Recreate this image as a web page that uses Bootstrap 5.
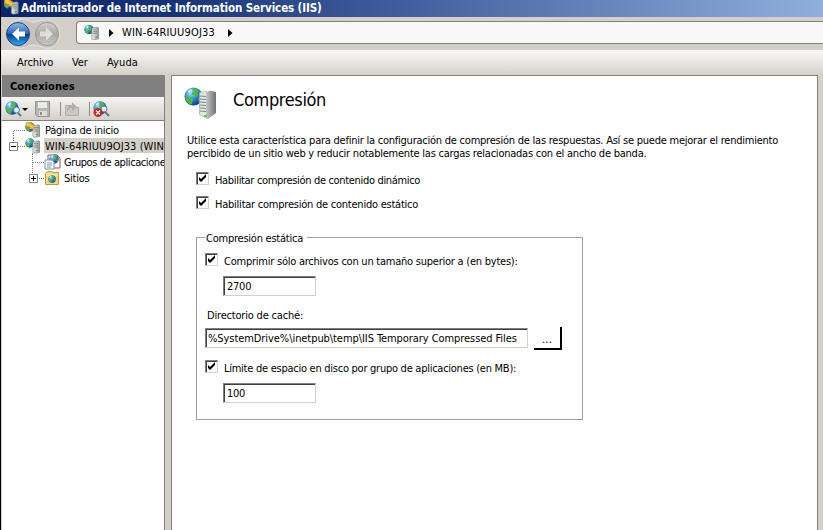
<!DOCTYPE html>
<html lang="es">
<head>
<meta charset="utf-8">
<title>Administrador de Internet Information Services (IIS)</title>
<link href="https://cdn.jsdelivr.net/npm/bootstrap@5.3.0/dist/css/bootstrap.min.css" rel="stylesheet">
<style>
body{width:823px;height:530px;overflow:hidden;background:#d4d0c8;color:#000;font-family:"DejaVu Sans Condensed","DejaVu Sans",sans-serif;font-stretch:condensed;font-size:11px;line-height:14px;letter-spacing:-.235px;border-left:1px solid #000}
svg{display:block;flex:none}
.titlebar{height:17px;background:linear-gradient(90deg,#0a246a 0,#173377 20%,#4a68a4 55%,#8fb0dc 100%);color:#fff;font-weight:700;padding-left:2px;font-size:11.5px;letter-spacing:-.1px}
.titlebar span{padding-left:1px;line-height:16px}
.navrow{height:33px;padding-left:4px}
.address{margin:4px 0 6px 27px;height:23px;background:#f8f8f6;border:1px solid #808080;border-right:0;border-radius:4px 0 0 4px;padding-left:7px;letter-spacing:.19px}
.menurow{height:25px;background:linear-gradient(#faf9f8,#d4d0c8);padding-left:16px;letter-spacing:-.1px}
.menurow .ver{width:35px}
.menurow .archivo{width:55px}
.menurow .ayuda{letter-spacing:.1px}
.left-pane{width:164px;border-right:1px solid #808080;background:#fff;margin-right:6px;border-left:1px solid #d4d0c8}
.pane-head{height:22px;background:#808080;font-weight:700;padding-left:8px;line-height:24px;letter-spacing:.08px}
.tools{height:24px;background:linear-gradient(#f6f5f3,#d4d0c8);border-bottom:1px solid #808080;padding-left:3px}
.tree{padding-top:1px}
.tree-line{height:16px;line-height:17px}
.server-name{background:#d4d0c8;height:15px;margin-left:2px;padding-left:1px;letter-spacing:.085px}
.pools{letter-spacing:-.42px}
.main-pane{width:647px;border:1px solid #808080;border-bottom:0;background:#fff;padding:11px 0 0 12px}
.heading{font-size:18px;line-height:24px;padding:0 0 9px 16px;letter-spacing:-.36px}
.desc{margin:13px 0 0 3px;line-height:13px}
.dynamic{margin:12px 0 0 12px;letter-spacing:-.33px}
.static{margin:9px 0 0 12px}
.tick{width:13px;height:13px;flex:none;border:1px solid;border-color:#808080 #d4d0c8 #d4d0c8 #808080;box-shadow:inset 1px 1px #404040}
.check-row{height:15px}
.check-row>span:last-child{padding:2px 0 0 6px}
.field{height:20px;border:1px solid;border-color:#808080 #d4d0c8 #d4d0c8 #808080;box-shadow:inset 1px 1px #404040;padding:3px 0 0 3px;line-height:14px}
.w-num{width:93px;margin-left:18px}
.w-path{width:323px;letter-spacing:-.07px;padding-left:2px;margin-top:1px}
.groupbox{border:1px solid #a0a0a0;width:387px;height:183px;margin:26px 0 0 12px;padding:0 0 0 8px}
.cap{background:#fff;width:102px;margin-top:-7px;padding-left:1px;height:15px;line-height:16px}
.min-size{margin-top:7px}
.quota{margin-top:10px;letter-spacing:-.26px}
.cache{margin:13px 0 4px 2px;letter-spacing:-.19px}
.browse{width:28px;height:23px;border:solid #000;border-width:0 2px 2px 0;margin-left:6px;line-height:26px;letter-spacing:.2px}
</style>
<script src="https://cdn.jsdelivr.net/npm/bootstrap@5.3.0/dist/js/bootstrap.bundle.min.js"></script>
</head>
<body class="d-flex flex-column text-nowrap">
<svg width="0" height="0" class="position-absolute">
<defs>
<radialGradient id="gl" cx=".35" cy=".3" r=".75"><stop offset="0" stop-color="#b4e4ff"/><stop offset=".45" stop-color="#2f8fe0"/><stop offset="1" stop-color="#0b3b91"/></radialGradient>
<linearGradient id="sv"><stop offset="0" stop-color="#eceeed"/><stop offset="1" stop-color="#929896"/></linearGradient>
<linearGradient id="side"><stop offset="0" stop-color="#c4c8c6"/><stop offset="1" stop-color="#6f7472"/></linearGradient>
<linearGradient id="bl" x2="0" y2="1"><stop offset="0" stop-color="#8fbde8"/><stop offset=".48" stop-color="#2b69b4"/><stop offset=".52" stop-color="#083d91"/><stop offset="1" stop-color="#35b0f2"/></linearGradient>
<linearGradient id="gr" x2="0" y2="1"><stop offset="0" stop-color="#d0d0ce"/><stop offset=".5" stop-color="#a9a9a8"/><stop offset="1" stop-color="#c9c9c7"/></linearGradient>
<symbol id="globe" viewBox="0 0 16 16"><circle cx="8" cy="8" r="7.6" fill="url(#gl)"/><path d="M8 .8c2 0 4 1 5 3l-2 1 1 2-2 2-2-2-2-1 2-2zM2 8l3 .5 3 2-1 2-.5 2.500C4 14 1.500 12 1 9zM12 9l3-1-.5 3-2 2z" fill="#52b83a"/><path d="M3 4l2-2 2 0-2 3z" fill="#d8f3ff"/></symbol>
<symbol id="tower" viewBox="0 0 9 14"><path d="M1 1L7 0 9 1V13L3 14 1 13z" fill="url(#sv)" stroke="#7c8280" stroke-width=".7"/><path d="M2 3h5M2 5h5M2 7h5" stroke="#777d7b" stroke-width=".8"/><path d="M5 11h2" stroke="#35b52b" stroke-width="1.500"/></symbol>
<symbol id="server" viewBox="0 0 16 16"><use href="#globe" x="0" y="0" width="10" height="10"/><use href="#tower" x="7" y="2" width="8" height="14"/></symbol>
<symbol id="home" viewBox="0 0 16 16"><use href="#server" width="16" height="16"/><path d="M1 1l3-1 4 3 1-1v5H4l1.500-1.500L1 4z" fill="#ffc52c" stroke="#bd7b10" stroke-width=".5"/></symbol>
<symbol id="check" viewBox="0 0 11 11"><path d="M2 4v3l2 2 5-5V1L4 6z"/></symbol>
</defs>
</svg>

<header class="titlebar d-flex"><svg width="17" height="16"><use href="#home" width="17" height="16" y="-1"/></svg><span>Administrador de Internet Information Services (IIS)</span></header>

<div class="navrow d-flex">
<svg width="44" height="33" viewBox="0 0 56 33" class="overflow-visible" preserveAspectRatio="xMinYMin slice"><path d="M13 3c8-2 11 2 16 2s8-3 15-2c14 2 14 25 1 28-7 1-10-3-16-3s-9 4-16 3C-3 28-2 6 13 3z" fill="#c6c3bc" stroke="#e6e4df"/><circle cx="13" cy="17" r="11.500" fill="url(#bl)" stroke="#164789"/><path d="M14 10.500l-7 6.500 7 6.500v-4h6v-5h-6z" fill="#fff"/><circle cx="42" cy="17" r="11.500" fill="url(#gr)" stroke="#999"/><path d="M41 10.500l7 6.500-7 6.500v-4h-6v-5h6z" fill="#dededc"/></svg>
<div class="address flex-grow-1 d-flex align-items-center"><svg width="17" height="17"><use href="#server" width="16" height="17"/></svg><svg width="5" height="8" class="ms-2"><path d="M0 0l4.500 4L0 8z"/></svg><span class="ms-2 pt-0">WIN-64RIUU9OJ33</span><svg width="5" height="8" class="ms-2 overflow-visible"><path d="M5 0l4.500 4L5 8z"/></svg></div>
</div>

<nav class="menurow d-flex align-items-center"><span class="archivo">Archivo</span><span class="ver">Ver</span><span class="ayuda">Ayuda</span></nav>

<div class="d-flex flex-grow-1">
<aside class="left-pane overflow-hidden">
<div class="pane-head">Conexiones</div>
<div class="tools"><svg width="120" height="23"><use href="#globe" x="0" y="4" width="14" height="14"/><circle cx="11.500" cy="13" r="3" fill="#d7effb" stroke="#557c91"/><path d="M13 16l3 3" stroke="#557c91" stroke-width="2"/><path d="M17 11h6l-3 3z"/><path d="M30.500 4.500h14v15h-12l-2-2z" fill="#b5b5b3" stroke="#929290"/><path d="M33 5h9v6h-9z" fill="#ebebea"/><path d="M34 14h8v5h-8z" fill="#deddda"/><path d="M35 15h2v3h-2z" fill="#8c8c8a"/><path d="M55.500 5v14M84.500 5v14" stroke="#8e8d89"/><path d="M60.500 8.500h5l2 2h6v8h-13z" fill="#cac8c3" stroke="#b0aea9"/><path d="M62 15c0-6 2-7 5-7V5l5 5-5 4v-3c-2 0-3 1-5 4z" fill="#b1b0ad"/><use href="#globe" x="88" y="4" width="14" height="14"/><circle cx="99" cy="12" r="3" fill="#d7effb" stroke="#557c91"/><path d="M100 15l4 4" stroke="#557c91" stroke-width="2"/><circle cx="93" cy="15.500" r="4.500" fill="#cf2420"/><path d="M91 13.500l4 4m0-4l-4 4" stroke="#fff" stroke-width="1.300"/></svg></div>
<div class="tree">
<div class="tree-line d-flex"><svg width="43" height="16"><path d="M11.500 16V8.500H23" fill="none" stroke="#808080" stroke-dasharray="1"/><use href="#home" x="23" width="16" height="16"/></svg><span>Página de inicio</span></div>
<div class="tree-line d-flex"><svg width="40" height="16"><path d="M16 8.500h7M11.500 0v3M30.500 15v1" stroke="#808080" stroke-dasharray="1"/><path d="M7.500 4.500h8v8h-8z" fill="#fff" stroke="#808080"/><path d="M9 8.500h5" stroke="#000"/><use href="#server" x="23" width="16" height="16"/></svg><span class="server-name flex-grow-1">WIN-64RIUU9OJ33 (WIN</span></div>
<div class="tree-line d-flex"><svg width="62" height="16"><path d="M30.500 0v16M31 8.500h12" fill="none" stroke="#808080" stroke-dasharray="1"/><path d="M46 1h9l3 3v10H46z" fill="#f7faff" stroke="#b1484a"/><use href="#globe" x="47" y="0" width="10" height="10"/><path d="M43 6h7l2 2v7h-9z" fill="#fff" stroke="#7793bb"/><path d="M45 9h5M45 11h5M45 13h4" stroke="#7793bb"/></svg><span class="pools">Grupos de aplicacione</span></div>
<div class="tree-line d-flex"><svg width="62" height="16"><path d="M30.500 0v8M31 8.500h12" fill="none" stroke="#808080" stroke-dasharray="1"/><path d="M27.500 4.500h8v8h-8z" fill="#fff" stroke="#808080"/><path d="M29 8.500h5M31.500 6v5" stroke="#000"/><path d="M43.500 3.500l2-2h4l2 1h5v12h-13z" fill="#f4d77d" stroke="#c3983b"/><path d="M44 5h12" stroke="#fff2b9"/><use href="#globe" x="46" y="5" width="8" height="8"/></svg><span>Sitios</span></div>
</div>
</aside>

<main class="main-pane">
<div class="d-flex align-items-center"><svg width="33" height="34"><use href="#globe" x="0" y="0" width="19" height="19"/><path d="M15.500 5.500l5-1 3 1v26l-8-4z" fill="#e3e6e5" stroke="#a3a8a6" stroke-width=".7"/><path d="M22 5l4-1.500 6 1.500v21l-8 6-2-1z" fill="url(#side)"/><path d="M16 9l6 .5M16 12l6 .5M16 15l6 .5M16 18l6 .5M16 21l6 .5M16 24l6 .5" stroke="#7e8482"/><path d="M20 29h3" stroke="#62cc25" stroke-width="2"/></svg><h1 class="heading m-0 fw-normal">Compresión</h1></div>
<div class="desc">Utilice esta característica para definir la configuración de compresión de las respuestas. Así se puede mejorar el rendimiento<br>percibido de un sitio web y reducir notablemente las cargas relacionadas con el ancho de banda.</div>
<div class="check-row dynamic d-flex"><span class="tick"><svg width="11" height="11"><use href="#check"/></svg></span><span>Habilitar compresión de contenido dinámico</span></div>
<div class="check-row static d-flex"><span class="tick"><svg width="11" height="11"><use href="#check"/></svg></span><span>Habilitar compresión de contenido estático</span></div>
<section class="groupbox">
<div class="cap">Compresión estática</div>
<div class="check-row min-size d-flex"><span class="tick"><svg width="11" height="11"><use href="#check"/></svg></span><span>Comprimir sólo archivos con un tamaño superior a (en bytes):</span></div>
<div class="field w-num mt-2">2700</div>
<div class="cache">Directorio de caché:</div>
<div class="d-flex"><div class="field w-path">%SystemDrive%\inetpub\temp\IIS Temporary Compressed Files</div><div class="browse text-center">...</div></div>
<div class="check-row quota d-flex"><span class="tick"><svg width="11" height="11"><use href="#check"/></svg></span><span>Límite de espacio en disco por grupo de aplicaciones (en MB):</span></div>
<div class="field w-num mt-2">100</div>
</section>
</main>
</div>
</body>
</html>
